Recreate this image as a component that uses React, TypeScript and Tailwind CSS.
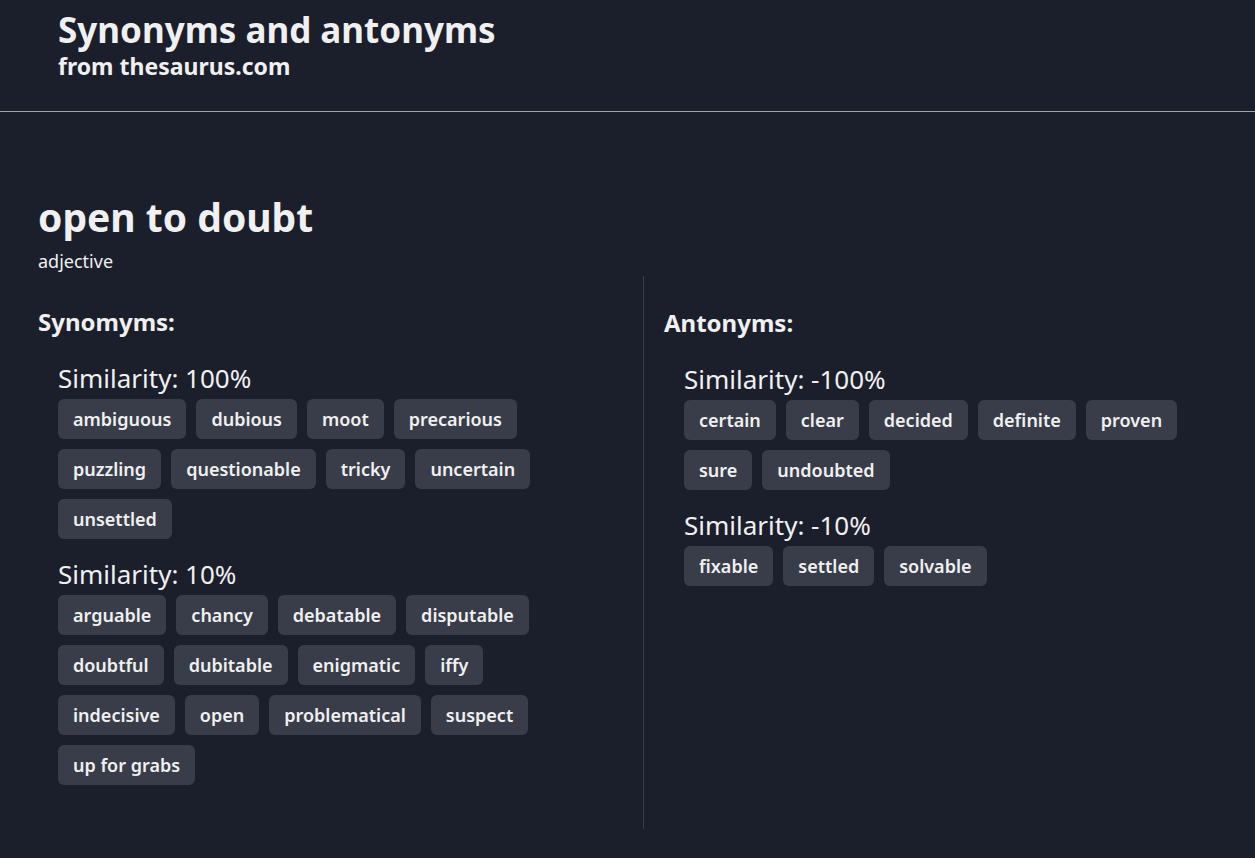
import React from "react";

const syn = [
  { label: "Similarity: 100%", words: ["ambiguous", "dubious", "moot", "precarious", "puzzling", "questionable", "tricky", "uncertain", "unsettled"] },
  { label: "Similarity: 10%", words: ["arguable", "chancy", "debatable", "disputable", "doubtful", "dubitable", "enigmatic", "iffy", "indecisive", "open", "problematical", "suspect", "up for grabs"] },
];
const ant = [
  { label: "Similarity: -100%", words: ["certain", "clear", "decided", "definite", "proven", "sure", "undoubted"] },
  { label: "Similarity: -10%", words: ["fixable", "settled", "solvable"] },
];

function Group({ label, words, first }: { label: string; words: string[]; first: boolean }) {
  return (
    <div className={first ? "mt-[24px] pl-[20px]" : "mt-[19px] pl-[20px]"}>
      <div className="text-[26px] leading-[32px] font-normal">{label}</div>
      <div className="mt-[5px] flex flex-wrap gap-[10px]">
        {words.map((w) => (
          <span key={w} className="h-[40px] px-[15px] flex items-center rounded-[6px] bg-[#383d49] text-[18px] font-semibold">
            {w}
          </span>
        ))}
      </div>
    </div>
  );
}

export default function App() {
  return (
    <div className="min-h-[858px] bg-[#1b1f2b] text-[#f0f0f0]" style={{ fontFamily: '"Noto Sans", "Open Sans", sans-serif' }}>
      <header className="px-[58px] pt-[10px] pb-[29px] border-b border-[#a3a3a3]">
        <h1 className="text-[35px] leading-[40px] font-bold">Synonyms and antonyms</h1>
        <h2 className="text-[23px] leading-[32px] font-bold">from thesaurus.com</h2>
      </header>
      <main className="px-[38px] pt-[81px]">
        <div className="text-[39px] leading-[48px] font-bold">open to doubt</div>
        <div className="mt-[6px] text-[18px] leading-[28px]">adjective</div>
        <div className="flex mt-[1px]">
          <section className="w-[605px] pt-[30px] pb-[44px] pr-[80px]">
            <h3 className="text-[24px] leading-[32px] font-bold">Synomyms:</h3>
            {syn.map((g, i) => (
              <Group key={g.label} label={g.label} words={g.words} first={i === 0} />
            ))}
          </section>
          <section className="flex-1 border-l border-[#3a3f4b] pl-[20px] pt-[31px] pr-[17px]">
            <h3 className="text-[24px] leading-[32px] font-bold">Antonyms:</h3>
            {ant.map((g, i) => (
              <Group key={g.label} label={g.label} words={g.words} first={i === 0} />
            ))}
          </section>
        </div>
      </main>
    </div>
  );
}
